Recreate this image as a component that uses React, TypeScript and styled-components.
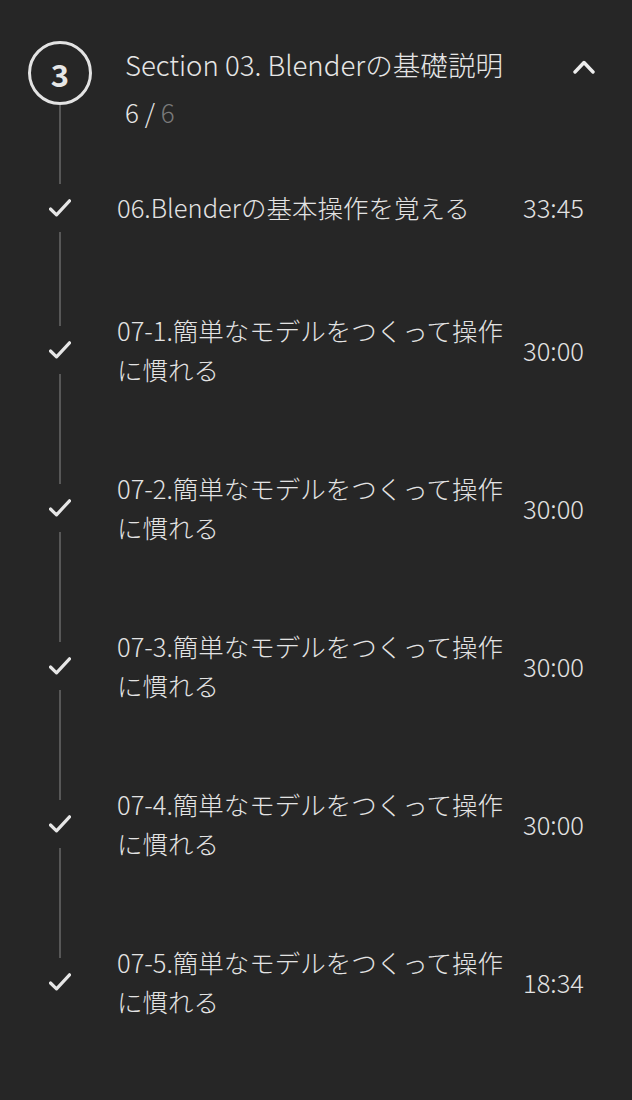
import React from "react";
import styled, { createGlobalStyle } from "styled-components";

const GlobalStyle = createGlobalStyle`
  html, body {
    margin: 0;
    padding: 0;
    background: #262626;
  }
  body {
    font-family: "Noto Sans CJK JP", "Noto Sans", sans-serif;
    color: #e3e3e3;
  }
  * { box-sizing: border-box; }
`;

const Page = styled.div`
  min-height: 1100px;
  background: #262626;
  padding-top: 41px;
`;

const Header = styled.div`
  display: flex;
  align-items: stretch;
  min-height: 103px;
  padding-left: 28px;
  padding-right: 36px;
`;

const Rail = styled.div`
  width: 64px;
  flex: none;
  display: flex;
  flex-direction: column;
  align-items: center;
`;

const Circle = styled.div`
  width: 64px;
  height: 64px;
  border-radius: 50%;
  border: 3px solid #e3e3e3;
  display: flex;
  align-items: center;
  justify-content: center;
  font-size: 31px;
  font-weight: 700;
  color: #e6e6e6;
  line-height: 1;
  flex: none;
`;

const Segment = styled.div<{ $hidden?: boolean }>`
  width: 2px;
  flex: 1;
  background: ${(p) => (p.$hidden ? "transparent" : "#575757")};
`;

const HeaderText = styled.div`
  flex: 1;
  margin-left: 33px;
  display: flex;
  flex-direction: column;
`;

const Title = styled.div`
  font-size: 27.6px;
  font-weight: 300;
  line-height: 48px;
  margin-top: -1px;
  color: #e6e6e6;
  white-space: nowrap;
`;

const Progress = styled.div`
  font-size: 26px;
  font-weight: 300;
  line-height: 48px;
  margin-top: 0;
  color: #e6e6e6;
`;

const Muted = styled.span`
  color: #7a7a7a;
`;

const Toggle = styled.button`
  flex: none;
  background: none;
  border: none;
  padding: 0;
  width: 24px;
  height: 52px;
  display: flex;
  align-items: center;
  justify-content: center;
  cursor: pointer;
`;

const Item = styled.div`
  display: flex;
  align-items: stretch;
  min-height: 127px;
  padding-left: 28px;
  padding-right: 48px;
`;

const CheckBox = styled.div`
  height: 48px;
  display: flex;
  align-items: center;
  justify-content: center;
  flex: none;
`;

const ItemBody = styled.div`
  flex: 1;
  display: flex;
  align-items: center;
  padding: 39px 0 41px;
  margin-left: 25px;
`;

const ItemTitle = styled.div`
  flex: 1;
  font-size: 25.5px;
  font-weight: 300;
  line-height: 39px;
  color: #e3e3e3;
`;

const Duration = styled.div`
  flex: none;
  margin-left: 12px;
  font-size: 25.5px;
  font-weight: 300;
  line-height: 39px;
  color: #e3e3e3;
`;

const Check = () => (
  <svg width="22" height="18" viewBox="0 0 22 18" fill="none">
    <polyline
      points="1.5,10 7.5,15.8 20.5,1.8"
      stroke="#e6e6e6"
      strokeWidth="3.2"
      strokeLinecap="round"
      strokeLinejoin="round"
    />
  </svg>
);

const ChevronUp = () => (
  <svg width="22" height="14" viewBox="0 0 22 14" fill="none">
    <polyline
      points="2,12 11,2.5 20,12"
      stroke="#ededed"
      strokeWidth="3.4"
      strokeLinecap="round"
      strokeLinejoin="round"
    />
  </svg>
);

const items = [
  { title: "06.Blenderの基本操作を覚える", time: "33:45" },
  { title: "07-1.簡単なモデルをつくって操作に慣れる", time: "30:00" },
  { title: "07-2.簡単なモデルをつくって操作に慣れる", time: "30:00" },
  { title: "07-3.簡単なモデルをつくって操作に慣れる", time: "30:00" },
  { title: "07-4.簡単なモデルをつくって操作に慣れる", time: "30:00" },
  { title: "07-5.簡単なモデルをつくって操作に慣れる", time: "18:34" },
];

export default function App() {
  return (
    <>
      <GlobalStyle />
      <Page>
        <Header>
          <Rail>
            <Circle>3</Circle>
            <Segment />
          </Rail>
          <HeaderText>
            <Title>Section 03. Blenderの基礎説明</Title>
            <Progress>
              6 / <Muted>6</Muted>
            </Progress>
          </HeaderText>
          <Toggle aria-label="collapse">
            <ChevronUp />
          </Toggle>
        </Header>
        {items.map((it, i) => (
          <Item key={i}>
            <Rail>
              <Segment />
              <CheckBox>
                <Check />
              </CheckBox>
              <Segment $hidden={i === items.length - 1} />
            </Rail>
            <ItemBody>
              <ItemTitle>{it.title}</ItemTitle>
              <Duration>{it.time}</Duration>
            </ItemBody>
          </Item>
        ))}
      </Page>
    </>
  );
}
